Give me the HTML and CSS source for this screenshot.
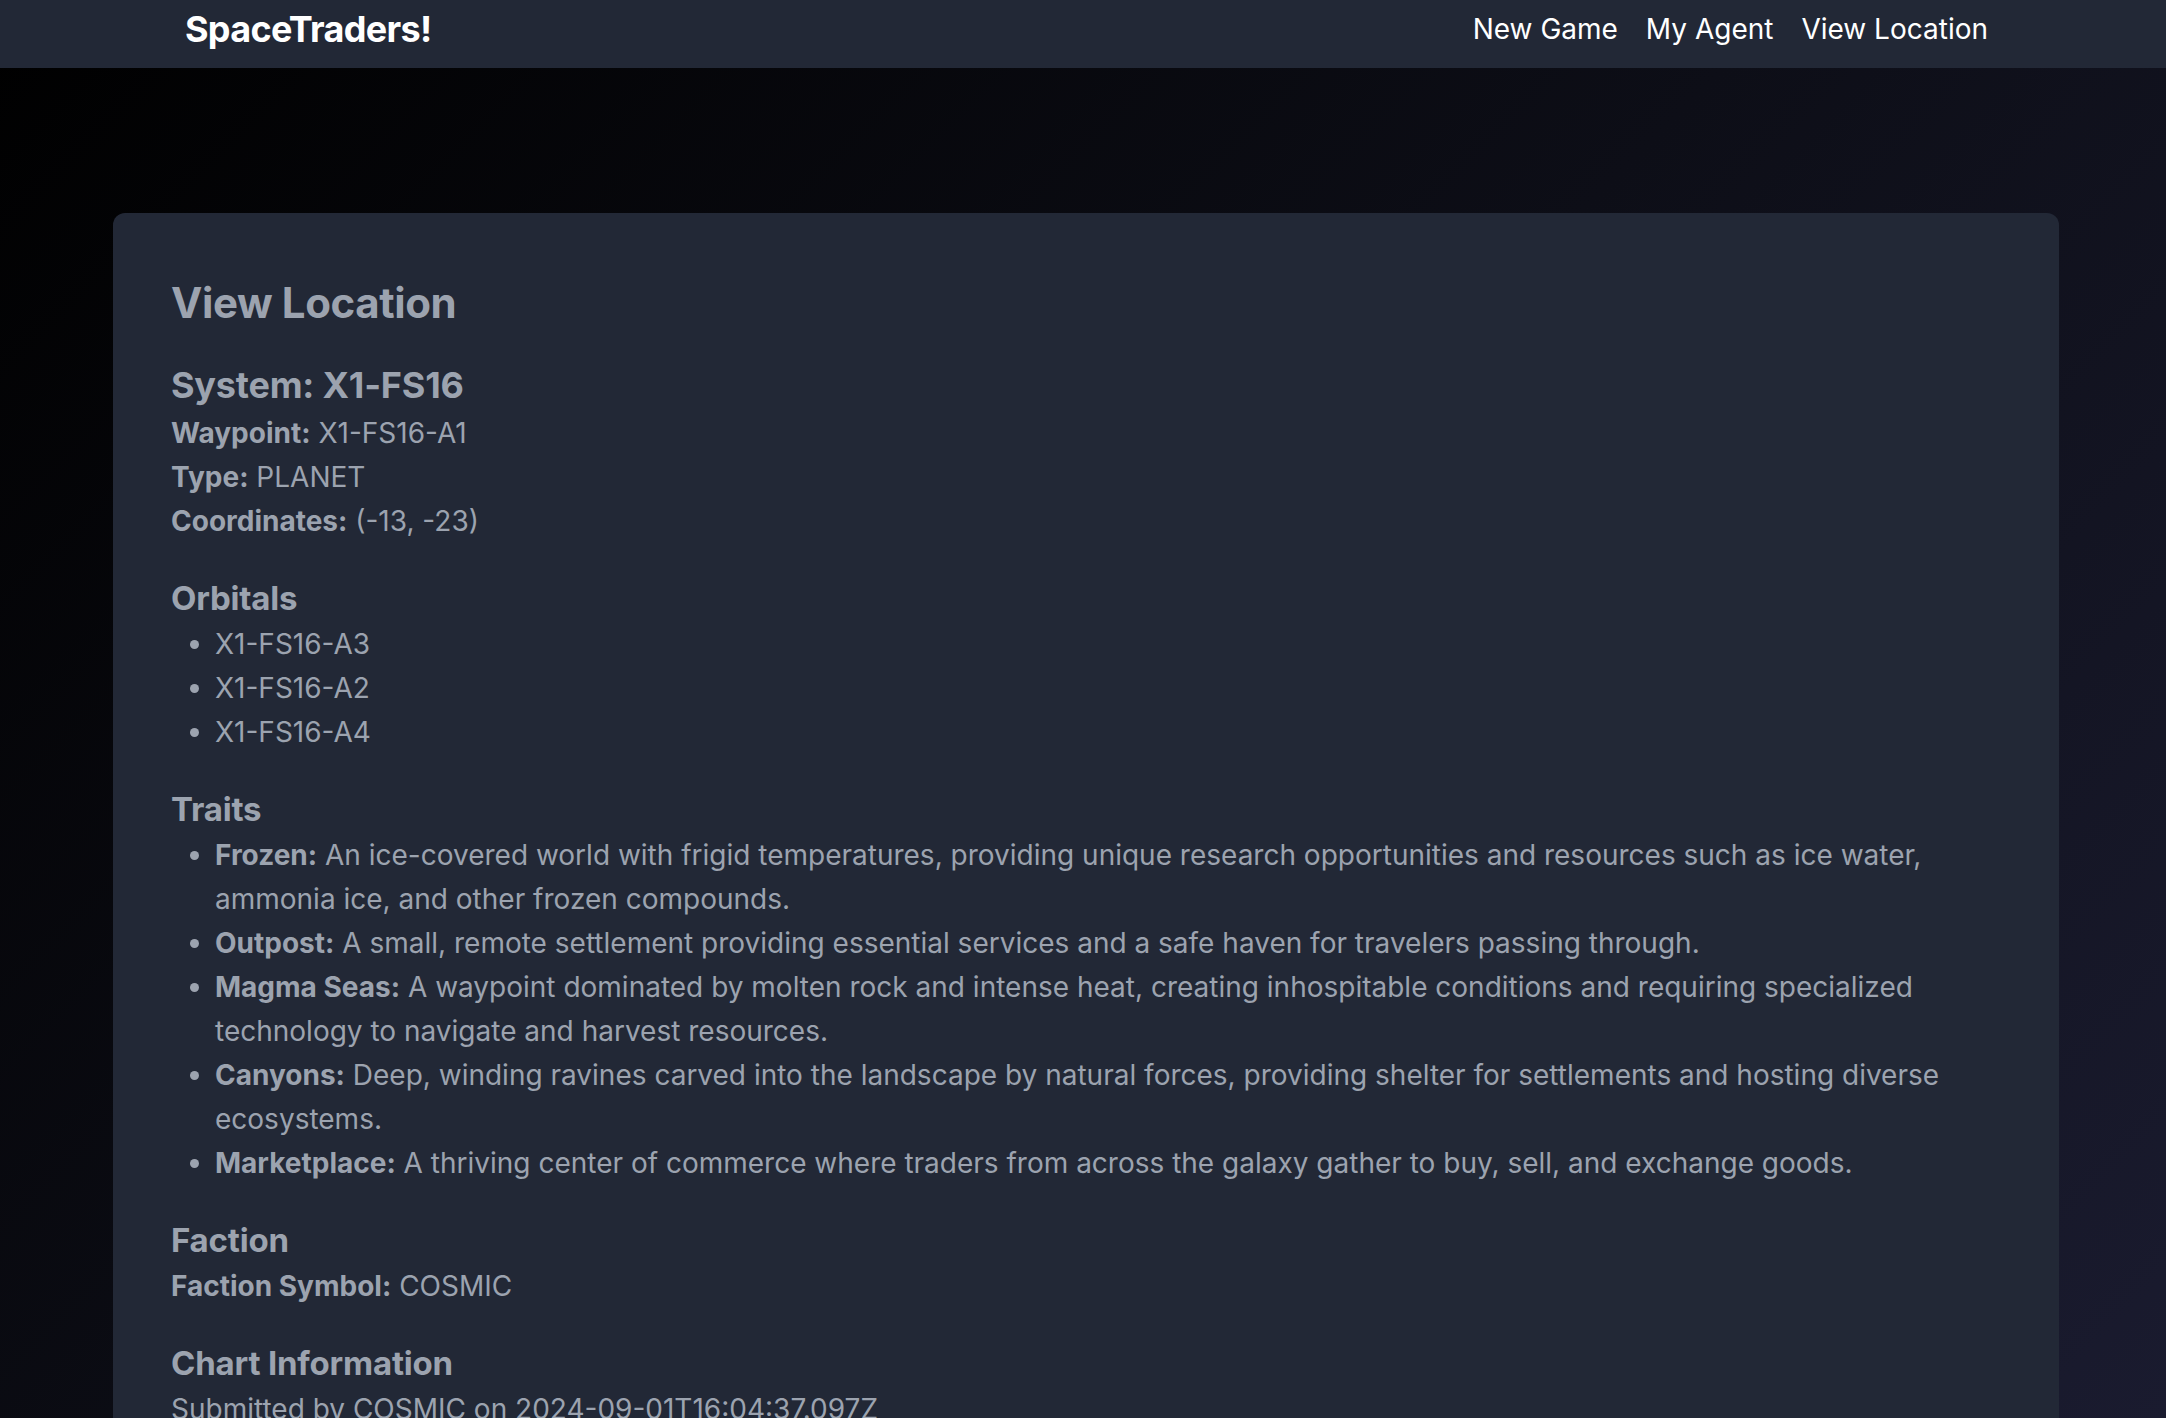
FILE: index.html
```html
<!DOCTYPE html>
<html lang="en">
<head>
<meta charset="utf-8">
<title>SpaceTraders!</title>
<link rel="stylesheet" href="styles.css">
</head>
<body>
<header class="topbar">
  <div class="brand">SpaceTraders!</div>
  <nav class="nav">
    <a href="#">New Game</a>
    <a href="#">My Agent</a>
    <a href="#">View Location</a>
  </nav>
</header>
<main class="page">
  <section class="card">
    <h1 class="title">View Location</h1>
    <h2 class="system">System: X1-FS16</h2>
    <p class="row"><b>Waypoint:</b> X1-FS16-A1</p>
    <p class="row"><b>Type:</b> PLANET</p>
    <p class="row"><b>Coordinates:</b> (-13, -23)</p>

    <h3 class="section">Orbitals</h3>
    <ul class="list">
      <li>X1-FS16-A3</li>
      <li>X1-FS16-A2</li>
      <li>X1-FS16-A4</li>
    </ul>

    <h3 class="section">Traits</h3>
    <ul class="list">
      <li><b>Frozen:</b> An ice-covered world with frigid temperatures, providing unique research opportunities and resources such as ice water, ammonia ice, and other frozen compounds.</li>
      <li><b>Outpost:</b> A small, remote settlement providing essential services and a safe haven for travelers passing through.</li>
      <li><b>Magma Seas:</b> A waypoint dominated by molten rock and intense heat, creating inhospitable conditions and requiring specialized technology to navigate and harvest resources.</li>
      <li><b>Canyons:</b> Deep, winding ravines carved into the landscape by natural forces, providing shelter for settlements and hosting diverse ecosystems.</li>
      <li><b>Marketplace:</b> A thriving center of commerce where traders from across the galaxy gather to buy, sell, and exchange goods.</li>
    </ul>

    <h3 class="section">Faction</h3>
    <p class="row"><b>Faction Symbol:</b> COSMIC</p>

    <h3 class="section">Chart Information</h3>
    <p class="row">Submitted by COSMIC on 2024-09-01T16:04:37.097Z</p>
  </section>
</main>
</body>
</html>
```

FILE: styles.css
```css
* { box-sizing: border-box; }

html, body {
  margin: 0;
  padding: 0;
}

body {
  font-family: Inter, "Noto Sans", sans-serif;
  color: #9ca3af;
  background: linear-gradient(135deg, #000000 0%, #0d0e17 50%, #1a1b2f 100%) fixed;
  min-height: 100vh;
}

.topbar {
  height: 68px;
  background: #222836;
  display: flex;
  align-items: center;
  justify-content: space-between;
  padding: 0 178px 10px 185px;
}

.brand {
  color: #ffffff;
  font-weight: 700;
  font-size: 36px;
  letter-spacing: -0.7px;
  line-height: 40px;
}

.nav {
  display: flex;
  gap: 28px;
}

.nav a {
  color: #ffffff;
  text-decoration: none;
  font-size: 28px;
  line-height: 36px;
}

.page {
  padding: 145px 107px 60px 113px;
}

.card {
  background: #222836;
  border-radius: 12px;
  padding: 62px 58px 80px 58px;
}

.title {
  margin: 0;
  font-size: 42px;
  line-height: 56px;
  font-weight: 700;
  letter-spacing: -0.4px;
}

.system {
  margin: 28px 0 0;
  font-size: 36px;
  line-height: 52px;
  font-weight: 700;
  letter-spacing: -0.2px;
}

.section {
  margin: 31px 0 0;
  font-size: 33px;
  line-height: 48px;
  font-weight: 700;
  letter-spacing: -0.2px;
}

.row {
  margin: 0;
  font-size: 28px;
  line-height: 44px;
}

.row b, .list b {
  font-weight: 700;
}

.list {
  margin: 0;
  padding-left: 44px;
  font-size: 28px;
  line-height: 44px;
}
```
